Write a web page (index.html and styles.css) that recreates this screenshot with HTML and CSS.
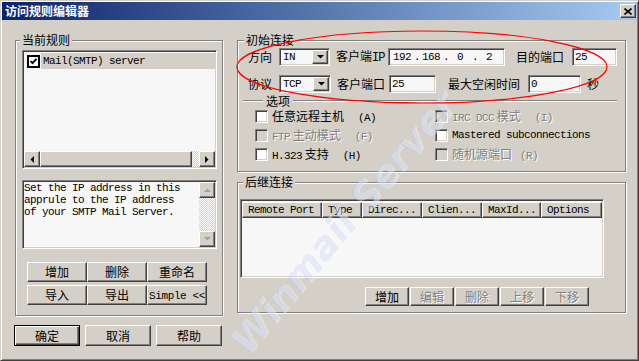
FILE: index.html
```html
<!DOCTYPE html>
<html>
<head>
<meta charset="utf-8">
<title>访问规则编辑器</title>
<link rel="stylesheet" href="styles.css">
</head>
<body>
<div class="window">
	<div class="titlebar">
		<span class="caption">访问规则编辑器</span>
		<span class="close"><svg width="8" height="7" viewBox="0 0 8 7"><path d="M0.5 0.5L7.5 6.5M7.5 0.5L0.5 6.5" stroke="#000" stroke-width="1.6"/></svg></span>
	</div>
	<div class="client">
		<div class="side">
			<fieldset class="group rules">
				<legend>当前规则</legend>
				<div class="listbox">
					<div class="item">
						<svg class="tick" width="13" height="13" viewBox="0 0 13 13"><rect x="1" y="1" width="11" height="11" fill="#fff" stroke="#000" stroke-width="2"/><path d="M3.5 6l2 2.2 4-4.4" fill="none" stroke="#000" stroke-width="1.8"/></svg>
						<span class="item-text en">Mail(SMTP) server</span>
					</div>
					<div class="hscroll">
						<span class="sbtn"><svg width="4" height="7"><path d="M4 0v7L0.5 3.5z"/></svg></span>
						<span class="thumb"></span>
						<span class="dither"></span>
						<span class="sbtn"><svg width="4" height="7"><path d="M0 0v7l3.5-3.5z"/></svg></span>
					</div>
				</div>
				<div class="memo">
					<div class="memo-text en">Set the IP address in this<br>apprule to the IP address<br>of your SMTP Mail Server.</div>
					<div class="vscroll">
						<span class="sbtn"><svg width="7" height="4"><path d="M0 4h7L3.5 0.5z" fill="#a0a0a0"/></svg></span>
						<span class="dither"></span>
						<span class="sbtn"><svg width="7" height="4"><path d="M0 0h7L3.5 3.5z" fill="#a0a0a0"/></svg></span>
					</div>
				</div>
				<div class="btn-grid">
					<button class="btn">增加</button>
					<button class="btn">删除</button>
					<button class="btn">重命名</button>
					<button class="btn">导入</button>
					<button class="btn">导出</button>
					<button class="btn"><span class="en">Simple &lt;&lt;</span></button>
				</div>
			</fieldset>
			<div class="dlg">
				<button class="btn default">确定</button>
				<button class="btn">取消</button>
				<button class="btn">帮助</button>
			</div>
		</div>

		<div class="main">
			<fieldset class="group initial">
				<legend>初始连接</legend>
				<div class="row">
					<span class="lbl w-a">方向</span>
					<span class="combo"><span class="combo-val en">IN</span><span class="combo-btn"><svg width="7" height="4"><path d="M0 0h7L3.5 3.5z"/></svg></span></span>
					<span class="lbl w-b">客户端<span class="en">IP</span></span>
					<span class="field ip en"><span>192</span><i>.</i><span>168</span><i>.</i><span>0</span><i>.</i><span>2</span></span>
					<span class="lbl w-c">目的端口</span>
					<span class="field port en">25</span>
				</div>
				<div class="row">
					<span class="lbl w-a">协议</span>
					<span class="combo"><span class="combo-val en">TCP</span><span class="combo-btn"><svg width="7" height="4"><path d="M0 0h7L3.5 3.5z"/></svg></span></span>
					<span class="lbl w-b">客户端口</span>
					<span class="field cport en">25</span>
					<span class="lbl w-d">最大空闲时间</span>
					<span class="field idle en">0</span>
					<span class="lbl w-e">秒</span>
				</div>
				<div class="sep"><span>选项</span></div>
				<div class="opts">
					<div class="opt"><span class="box"></span><span class="opt-text">任意远程主机<span class="en key">(A)</span></span></div>
					<div class="opt off"><span class="box"></span><span class="opt-text"><span class="en">IRC DCC</span> 模式<span class="en key">(I)</span></span></div>
					<div class="opt off"><span class="box"></span><span class="opt-text"><span class="en">FTP</span> 主动模式<span class="en key">(F)</span></span></div>
					<div class="opt"><span class="box"></span><span class="opt-text en">Mastered subconnections</span></div>
					<div class="opt"><span class="box"></span><span class="opt-text"><span class="en">H.323</span> 支持<span class="en key">(H)</span></span></div>
					<div class="opt off"><span class="box"></span><span class="opt-text">随机源端口<span class="en key short">(R)</span></span></div>
				</div>
			</fieldset>

			<fieldset class="group follow">
				<legend>后继连接</legend>
				<div class="listview">
					<div class="lv-head en">
						<span style="width:80px">Remote Port</span>
						<span style="width:40px">Type</span>
						<span style="width:60px">Direc...</span>
						<span style="width:60px">Clien...</span>
						<span style="width:59px">MaxId...</span>
						<span style="width:61px">Options</span>
					</div>
				</div>
				<div class="acts">
					<button class="btn">增加</button>
					<button class="btn off">编辑</button>
					<button class="btn off">删除</button>
					<button class="btn off">上移</button>
					<button class="btn off">下移</button>
				</div>
			</fieldset>
		</div>
	</div>

	<div class="watermark">Winmail Server</div>
	<svg class="mark" width="639" height="361" viewBox="0 0 639 361"><ellipse cx="422" cy="67" rx="185" ry="36" fill="none" stroke="#ff0000" stroke-width="1.2"/></svg>
</div>
</body>
</html>
```

FILE: styles.css
```css
html,body{margin: 0; padding: 0;}
body{
	font: 12px/14px "Noto Sans CJK SC", sans-serif;
	color: #000;
	background: #fff;
}
.en{
	font-family: "Liberation Mono", monospace;
	font-size: 11px;
	letter-spacing: -0.6px;
}
.window{
	position: relative;
	width: 639px;
	height: 361px;
	box-sizing: border-box;
	padding: 1px;
	background: #d4d0c8;
	border: 1px solid;
	border-color: #d4d0c8 #404040 #404040 #d4d0c8;
	box-shadow: inset 1px 1px #fff, inset -1px -1px #808080;
	overflow: hidden;
}
.titlebar{
	height: 18px;
	display: flex;
	align-items: center;
	justify-content: space-between;
	padding: 0 1px 0 3px;
	background: linear-gradient(to right, #0a246a, #a6caf0);
}
.caption{
	color: #fff;
	font-weight: bold;
}
.close{
	width: 16px;
	height: 14px;
	box-sizing: border-box;
	display: flex;
	align-items: center;
	justify-content: center;
	background: #d4d0c8;
	border: 1px solid;
	border-color: #fff #404040 #404040 #fff;
	box-shadow: inset -1px -1px #808080;
}

.client{
	display: flex;
	padding: 13px 0 0 13px;
}
.side{
	width: 208px;
	display: flex;
	flex-direction: column;
}
.main{
	width: 389px;
	margin-left: 14px;
}

/* etched group box */
.group{
	margin: 0;
	min-width: 0;
	border: 1px solid #808080;
	box-shadow: inset 1px 1px #fff, 1px 1px #fff;
}
.group legend{
	padding: 0 2px;
	line-height: 14px;
	background: #d4d0c8;
}

/* sunken / raised edges */
.listbox, .memo, .field, .combo, .listview, .box{
	box-sizing: border-box;
	border: 1px solid;
	border-color: #808080 #fff #fff #808080;
	box-shadow: inset 1px 1px #404040, inset -1px -1px #d4d0c8;
	background: #f7f7f7;
}
.btn, .sbtn, .thumb, .combo-btn, .lv-head span{
	box-sizing: border-box;
	background: #d4d0c8;
	border: 1px solid;
	border-color: #fff #404040 #404040 #fff;
	box-shadow: inset -1px -1px #808080;
}
.btn{
	padding: 0;
	font: inherit;
	color: #000;
}
.btn.default{
	border-color: #000;
	box-shadow: inset 1px 1px #fff, inset -1px -1px #404040, inset -2px -2px #808080;
}
.btn.off, .opt.off .opt-text{
	color: #808080;
	text-shadow: 1px 1px #fff;
}
.sbtn{
	width: 16px;
	height: 16px;
	flex: none;
	display: flex;
	align-items: center;
	justify-content: center;
}
.dither{
	background: repeating-conic-gradient(#fff 0 25%, #d4d0c8 0 50%) 0 0/2px 2px;
}

/* current rules */
.rules{
	padding: 3px 5px 10px 6px;
}
.rules legend{margin-left: -2px;}
.listbox{
	height: 119px;
	padding: 1px;
	display: flex;
	flex-direction: column;
	justify-content: space-between;
}
.item{
	display: flex;
	align-items: center;
	height: 16px;
	margin-top: 1px;
	padding-left: 3px;
}
.item-text{
	flex: 1;
	height: 16px;
	line-height: 16px;
	margin-left: 1px;
	padding-left: 2px;
	background: #d4d0c8;
}
.hscroll{
	display: flex;
	height: 16px;
}
.thumb{flex: 1;}
.hscroll .dither{width: 7px;}
.memo{
	height: 69px;
	margin-top: 11px;
	padding: 1px;
	display: flex;
}
.memo-text{
	flex: 1;
	padding: 0;
	line-height: 12px;
	white-space: nowrap;
}
.vscroll{
	width: 16px;
	display: flex;
	flex-direction: column;
}
.vscroll .dither{flex: 1;}
.btn-grid{
	display: grid;
	grid-template-columns: repeat(3, 60px);
	grid-auto-rows: 20px;
	row-gap: 3px;
	margin: 13px 0 0 5px;
}
.btn-grid .en{letter-spacing: -0.4px;}
.dlg{
	display: flex;
	gap: 5px;
	margin: 9px 0 0 -1px;
}
.dlg .btn{
	width: 66px;
	height: 21px;
}

/* initial connection */
.initial{
	padding: 1px 8px 7px 5px;
}
.initial legend{margin-left: 1px;}
.row{
	display: flex;
	align-items: center;
	height: 18px;
	padding-left: 5px;
}
.row + .row{margin-top: 9px;}
.lbl{
	flex: none;
	white-space: nowrap;
}
.w-a{width: 31px;}
.w-b{width: 52px; margin-left: 6px;}
.w-c{width: 56px; margin-left: 11px;}
.w-d{width: 80px; margin-left: 12px;}
.w-e{margin-left: 6px;}
.w-b .en{font-size: 12px; letter-spacing: -1px;}
.combo{
	width: 52px;
	height: 18px;
	padding: 1px;
	display: flex;
}
.combo-val{
	flex: 1;
	padding-left: 2px;
	line-height: 15px;
}
.combo-btn{
	width: 16px;
	display: flex;
	align-items: center;
	justify-content: center;
}
.field{
	height: 18px;
	padding: 0 2px;
	line-height: 16px;
	flex: none;
}
.ip{
	width: 117px;
	display: flex;
	padding-left: 1px;
}
.ip span{width: 24px; text-align: center;}
.ip i{width: 5px; font-style: normal; text-align: center;}
.port{width: 45px;}
.cport{width: 47px;}
.idle{width: 53px;}
.sep{
	display: flex;
	align-items: center;
	height: 13px;
	margin-top: 1px;
}
.sep::before, .sep::after{
	content: "";
	height: 0;
	border-top: 1px solid #808080;
	border-bottom: 1px solid #fff;
}
.sep::before{width: 20px;}
.sep::after{flex: 1;}
.sep span{margin: 0 3px; line-height: 13px;}
.opts{
	display: grid;
	grid-template-columns: 180px 1fr;
	grid-auto-rows: 19px;
	padding-left: 12px;
	padding-top: 0;
}
.opt{
	display: flex;
	align-items: center;
}
.box{
	width: 13px;
	height: 13px;
	flex: none;
	background: #fff;
}
.opt.off .box{background: #d4d0c8;}
.opt-text{
	margin-left: 4px;
	white-space: nowrap;
	line-height: 13px;
}
.key{margin-left: 14px;}
.key.short{margin-left: 8px;}

/* follow-up connections */
.follow{
	margin-top: 3px;
	padding: 10px 0 6px 2px;
}
.follow legend{margin-left: 3px;}
.listview{
	width: 364px;
	height: 79px;
	padding: 2px 1px 1px;
}
.lv-head{
	display: flex;
	height: 16px;
}
.lv-head span{
	height: 16px;
	line-height: 14px;
	padding-left: 5px;
	white-space: nowrap;
	overflow: hidden;
}
.acts{
	display: flex;
	gap: 1px;
	margin: 9px 0 0 125px;
}
.acts .btn{
	width: 44px;
	height: 19px;
	line-height: 15px;
}

.watermark{
	position: absolute;
	left: 342px;
	top: 222px;
	transform: translate(-50%, -50%) rotate(-50deg);
	font: italic bold 38px "DejaVu Sans", sans-serif;
	color: rgba(160, 175, 235, 0.22);
	text-shadow: 1px 1px rgba(255, 255, 255, 0.45);
	white-space: nowrap;
	pointer-events: none;
}
.mark{
	position: absolute;
	left: -1px;
	top: -1px;
	pointer-events: none;
}
```
